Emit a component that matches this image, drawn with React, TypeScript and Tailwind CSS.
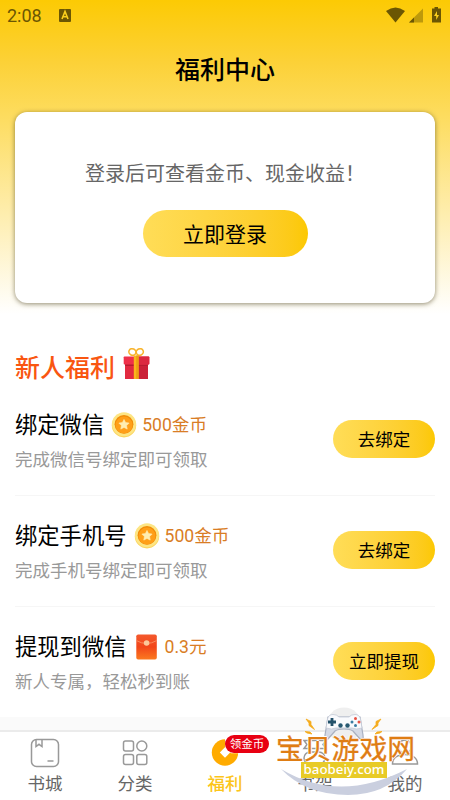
import type { ReactNode } from 'react'

type Task = {
  title: string
  reward: string
  description: string
  action: string
  icon: ReactNode
}

const tasks: Task[] = [
  {
    title: '绑定微信',
    reward: '500金币',
    description: '完成微信号绑定即可领取',
    action: '去绑定',
    icon: <CoinIcon />,
  },
  {
    title: '绑定手机号',
    reward: '500金币',
    description: '完成手机号绑定即可领取',
    action: '去绑定',
    icon: <CoinIcon />,
  },
  {
    title: '提现到微信',
    reward: '0.3元',
    description: '新人专属，轻松秒到账',
    action: '立即提现',
    icon: <EnvelopeIcon />,
  },
]

function CoinIcon() {
  return (
    <svg className="h-[26px] w-[26px]" viewBox="0 0 26 26">
      <circle cx="13" cy="13.2" r="12.2" fill="#fbd45c" />
      <circle cx="13" cy="12.2" r="12" fill="#fde584" />
      <circle cx="13" cy="12.3" r="9.4" fill="#f08c08" />
      <circle cx="13" cy="13" r="8.5" fill="#ff9f18" />
      <path
        d="M13 7.4l1.6 3.2 3.5.5-2.5 2.5.6 3.5-3.2-1.7-3.2 1.7.6-3.5-2.5-2.5 3.5-.5z"
        fill="#ffedb0"
        stroke="#ffedb0"
        strokeWidth=".6"
        strokeLinejoin="round"
      />
    </svg>
  )
}

function EnvelopeIcon() {
  return (
    <svg className="h-[26px] w-[26px]" viewBox="0 0 26 26">
      <defs>
        <linearGradient id="envelope" x1="0" y1="0" x2="0" y2="1">
          <stop offset="0" stopColor="#f4592d" />
          <stop offset=".5" stopColor="#f2461a" />
          <stop offset="1" stopColor="#fb7a20" />
        </linearGradient>
      </defs>
      <rect x="2.3" y=".5" width="20.5" height="25" rx="1.8" fill="url(#envelope)" />
      <path d="M2.3 6.5q10.2 6 20.5 0" fill="none" stroke="#fa8a5c" strokeWidth="1" />
      <circle cx="12.6" cy="9" r="2.8" fill="#fbc79a" />
    </svg>
  )
}

function GiftIcon() {
  return (
    <svg className="h-[33px] w-[27px]" viewBox="0 0 27 33">
      <ellipse cx="9.4" cy="5" rx="3.6" ry="3.2" fill="none" stroke="#f8b32b" strokeWidth="1.6" transform="rotate(25 9.4 5)" />
      <ellipse cx="16.8" cy="5" rx="3.6" ry="3.2" fill="none" stroke="#f8b32b" strokeWidth="1.6" transform="rotate(-25 16.8 5)" />
      <path d="M2 17h23v15H2z" fill="#e22a40" />
      <path d="M13 17h12v15H13z" fill="#cb2138" />
      <path d="M2 17h23v2H2z" fill="#b81c30" />
      <rect x=".7" y="9.5" width="25.6" height="8" rx=".8" fill="#ef3149" />
      <path d="M13 9.5h12.5a.8.8 0 0 1 .8.8v6.4a.8.8 0 0 1-.8.8H13z" fill="#dc2940" />
      <path d="M10.8 8.5h4.8V32h-4.8z" fill="#fbb51e" />
      <path d="M13.2 8.5h2.4V32h-2.4z" fill="#eda012" />
    </svg>
  )
}

function StatusBar() {
  return (
    <div className="flex h-8 items-center pl-[7px] pr-2 text-[#6b5603]">
      <span className="text-[18px] leading-8">2:08</span>
      <svg className="mb-0.5 ml-[17px] h-[13px] w-[12px]" viewBox="0 0 12 13">
        <rect width="12" height="13" rx="1" fill="#6b5603" />
        <path d="M3 10l3-7.5L9 10M4.2 7.7h3.6" fill="none" stroke="#fbd01c" strokeWidth="1.6" />
      </svg>
      <svg className="mb-0.5 ml-auto h-[16px] w-[56px]" viewBox="0 0 56 16">
        <path d="M0 4q9.5-7 19 0L9.5 15.5z" fill="#6b5603" />
        <path d="M23 15.5h14V1.5z" fill="#bd990b" />
        <path d="M23 15.5h5v-5z" fill="#6b5603" />
        <path d="M48.5 0h3.5v1.5h3v14h-9v-14h2.5z" fill="#6b5603" />
        <path d="M51 4l-3 5h2.2v4L53 8h-2z" fill="#fbd01c" />
      </svg>
    </div>
  )
}

function LoginCard() {
  return (
    <section className="mx-[15px] flex h-[191px] flex-col items-center rounded-xl bg-white pt-12 shadow-[0_1px_5px_rgba(70,60,20,0.6)]">
      <p className="whitespace-nowrap text-[20px] leading-[28px] text-[#666]">登录后可查看金币、现金收益！</p>
      <button className="mt-[22px] h-[47px] w-[165px] rounded-full bg-linear-to-r from-[#ffdd57] to-[#fcc800] pt-1 text-[21px] text-black">
        立即登录
      </button>
    </section>
  )
}

function TaskRow({ task }: { task: Task }) {
  return (
    <li className="flex h-[111px] items-start justify-between border-b border-[#f6f6f6] last:h-[110px] last:border-0">
      <div className="pt-6">
        <div className="flex h-8 items-center">
          <h3 className="text-[22.3px] leading-8 text-black">{task.title}</h3>
          <span className="ml-[7px]">{task.icon}</span>
          <span className="ml-[5px] text-[17.6px] leading-8 text-[#d97d25]">{task.reward}</span>
        </div>
        <p className="mt-[5px] text-[17.5px] leading-7 text-[#999]">{task.description}</p>
      </div>
      <button className="mt-[35px] h-[38px] w-[102px] rounded-full bg-linear-to-r from-[#ffdd57] to-[#fcc800] pt-0.5 text-[17.5px] text-black">
        {task.action}
      </button>
    </li>
  )
}

function TabItem({ label, active, children }: { label: string; active?: boolean; children: ReactNode }) {
  return (
    <a className={`flex w-[90px] flex-col items-center pt-1.5 ${active ? 'font-medium text-[#fcc51a]' : 'text-[#666]'}`}>
      {children}
      <span className="mt-1 text-[17.5px] leading-6">{label}</span>
    </a>
  )
}

function TabBar() {
  const iconClass = 'h-[30px] w-[30px] fill-none stroke-[#999] stroke-[1.5]'

  return (
    <nav className="flex h-[70px] border-t-2 border-[#ebebeb] bg-white">
      <TabItem label="书城">
        <svg className={iconClass} viewBox="0 0 30 30">
          <rect x="1.5" y="1.5" width="27" height="27" rx="5" />
          <path d="M6 1.5v7l3-2.2 3 2.2v-7M17.5 23h6" />
        </svg>
      </TabItem>
      <TabItem label="分类">
        <svg className={iconClass} viewBox="0 0 30 30">
          <rect x="3.5" y="3" width="10" height="10" rx="2" />
          <circle cx="21.8" cy="8" r="5" />
          <rect x="3.5" y="16.5" width="10" height="10" rx="2" />
          <rect x="16.8" y="16.5" width="10" height="10" rx="2" />
        </svg>
      </TabItem>
      <TabItem label="福利" active>
        <span className="relative">
          <svg className="h-[30px] w-[30px]" viewBox="0 0 30 30">
            <circle cx="15" cy="14.5" r="13.2" fill="#ffab00" />
            <path d="M15 9.3l5.2 5.2-5.2 5.2-5.2-5.2z" fill="#fff" />
            <path d="M15 9.5l3 3 3 2.8h9V0H15z" fill="#fff" />
          </svg>
          <span className="absolute -top-[3px] left-[15px] h-[18px] w-[44px] rounded-full bg-[#e80012] text-center text-[11.5px] leading-[19px] font-normal whitespace-nowrap text-white">
            领金币
          </span>
        </span>
      </TabItem>
      <TabItem label="书架">
        <svg className={iconClass} viewBox="0 0 30 30">
          <path d="M4 2.5h22l-3 4 3 4H4l3-4z" />
          <rect x="4" y="14" width="21" height="12" rx="6" />
        </svg>
      </TabItem>
      <TabItem label="我的">
        <svg className={iconClass} viewBox="0 0 30 30">
          <circle cx="15" cy="8.5" r="6.5" />
          <path d="M2.5 26c0-6 5-9.5 12.5-9.5S27.5 20 27.5 26z" />
        </svg>
      </TabItem>
    </nav>
  )
}

function Watermark() {
  return (
    <div className="pointer-events-none absolute top-[705px] left-[270px] h-[95px] w-[150px]">
      <svg className="absolute inset-0 h-full w-full" viewBox="0 0 150 95">
        <circle cx="74" cy="20" r="17.5" fill="#efefef" />
        <path
          d="M58 12L55 30q-1 7 3 4l7-8q3-2 9-2t9 2l7 8q4 3 3-4l-3-18z"
          fill="#d5dae6"
          stroke="#a9b0c0"
          strokeWidth="1.2"
        />
        <path
          d="M57.5 14q1-4.5 5.5-4.5 4 0 6 2.5h10q2-2.5 6-2.5 4.5 0 5.5 4.5l1.5 9q-6 2-10 0H66q-4 2-10 0z"
          fill="#f9fafd"
          stroke="#c3c9d6"
          strokeWidth=".8"
        />
        <path d="M62 13v8M58 17h8" stroke="#23526b" strokeWidth="2.8" />
        <circle cx="70.5" cy="20.5" r="2.2" fill="#285972" />
        <circle cx="77.5" cy="20.5" r="2.2" fill="#285972" />
        <circle cx="85.5" cy="13.5" r="1.5" fill="#e75143" />
        <circle cx="89" cy="17" r="1.5" fill="#e75143" />
        <circle cx="85.5" cy="20.5" r="1.5" fill="#3b7da2" />
        <circle cx="82" cy="17" r="1.5" fill="#3b7da2" />
        <path
          d="M36 14l5 2.5 0 3 3.5 5-5.5-4 0-2.5zM111 14l-5 2.5 0 3-4 5 6-4 0-2.5zM35 26.5l5 .5 2 2-5-1zM112 26.5l-5 .5-2 2 5-1z"
          fill="#f5ac1e"
          stroke="#f5ac1e"
          strokeWidth=".8"
        />
        <path d="M11 64q58 35 126 0-22 26-59 26-42 0-67-26z" fill="#cacfdf" />
      </svg>
      <span className="absolute top-[25px] left-[6px] text-[27.8px] leading-[40px] whitespace-nowrap text-[#df7d14] [-webkit-text-stroke:0.3px_#df7d14] [text-shadow:1px_0_white,-1px_0_white,0_1px_white,0_-1px_white]">
        宝贝游戏网
      </span>
      <span className="absolute top-[57px] left-[31px] h-[16px] w-[86px] bg-[#e8cb27] text-center font-['Noto_Sans',sans-serif] text-[13.3px] leading-[15px] font-medium text-white">
        baobeiy.com
      </span>
    </div>
  )
}

export default function App() {
  return (
    <main className="relative flex h-[800px] w-[450px] flex-col overflow-hidden bg-white font-[Roboto,'Noto_Sans_CJK_SC',sans-serif]">
      <div className="h-[320px] shrink-0 bg-[linear-gradient(180deg,#fcca04_0,#fcd137_62px,#fddc5e_115px,#fff_314px)]">
        <StatusBar />
        <h1 className="h-20 pt-[21px] text-center text-[25px] leading-9 font-medium text-black">福利中心</h1>
        <LoginCard />
      </div>

      <section className="flex-1 px-[15px]">
        <div className="flex h-[65px] items-center pt-[33px]">
          <h2 className="text-[25px] leading-9 font-medium text-[#f95611]">新人福利</h2>
          <span className="mb-3 ml-2">
            <GiftIcon />
          </span>
        </div>
        <ul>
          {tasks.map((task) => (
            <TaskRow key={task.title} task={task} />
          ))}
        </ul>
      </section>

      <div className="h-[13px] shrink-0 bg-[#fafafa]" />
      <TabBar />
      <Watermark />
    </main>
  )
}
